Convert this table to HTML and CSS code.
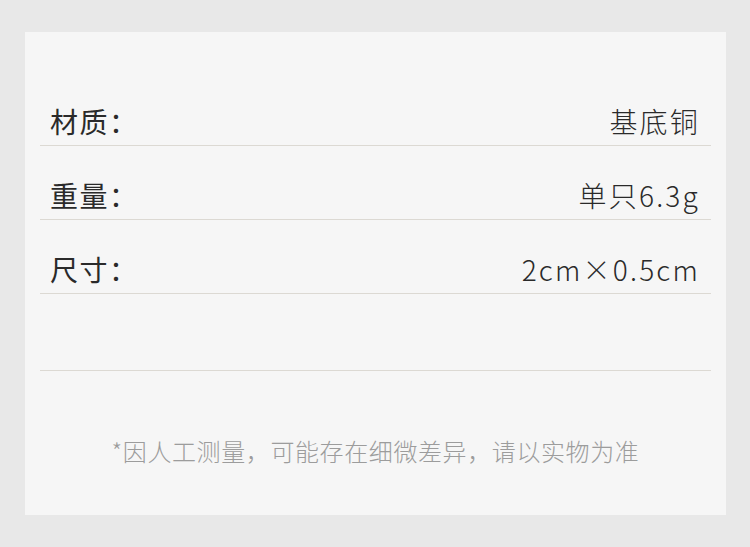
FILE: index.html
```html
<!DOCTYPE html>
<html lang="zh">
<head>
<meta charset="utf-8">
<link rel="stylesheet" href="styles.css">
</head>
<body>
<div class="card">
  <div class="rows">
    <div class="row"><span class="label">材质：</span><span class="value">基底铜</span></div>
    <div class="row"><span class="label">重量：</span><span class="value">单只6.3g</span></div>
    <div class="row"><span class="label">尺寸：</span><span class="value">2cm×0.5cm</span></div>
    <div class="row empty"></div>
  </div>
  <p class="note">*因人工测量，可能存在细微差异，请以实物为准</p>
</div>
</body>
</html>
```

FILE: styles.css
```css
html, body {
  margin: 0;
  padding: 0;
}
body {
  background: #e8e8e8;
  width: 750px;
  height: 547px;
  padding-top: 32px;
  box-sizing: border-box;
  font-family: "Noto Sans CJK SC", "Noto Sans", sans-serif;
}
.card {
  margin-left: 25px;
  width: 701px;
  height: 483px;
  background: #f6f6f6;
  padding: 40px 15px 0;
  box-sizing: border-box;
}
.rows {
  display: flex;
  flex-direction: column;
}
.row {
  border-bottom: 1px solid #dcd9d3;
  display: flex;
  justify-content: space-between;
  align-items: flex-end;
  padding: 0 11px 8px 10px;
  height: 65px;
  color: #2a2a2a;
  font-size: 28px;
  line-height: 32px;
}
.row.empty {
  height: 68px;
}
.label {
  font-weight: 400;
  letter-spacing: 1.5px;
}
.value {
  font-weight: 300;
  letter-spacing: 2.2px;
}
.note {
  margin: 65px 0 0;
  text-align: center;
  font-size: 24px;
  line-height: 30px;
  font-weight: 300;
  letter-spacing: 0.6px;
  color: #9c9c9c;
}
```
